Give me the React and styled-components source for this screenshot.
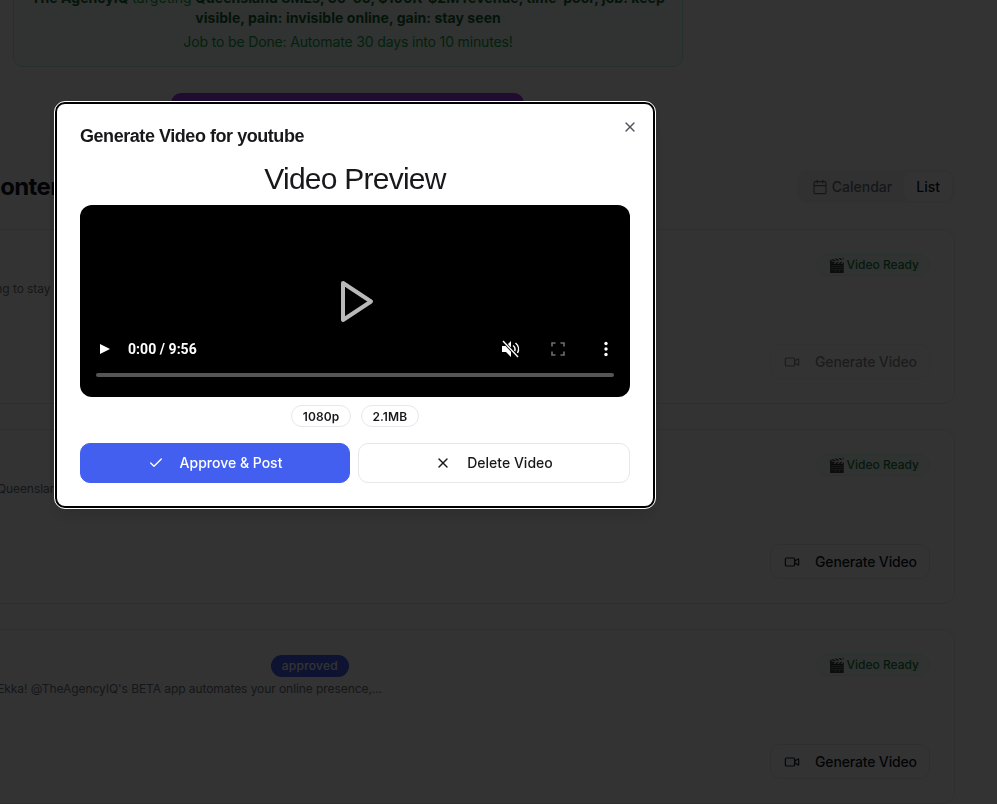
import { createGlobalStyle, styled } from "styled-components";
import { Calendar, Check, Video, X } from "lucide-react";

const GlobalStyle = createGlobalStyle`
  html, body {
    margin: 0;
    height: 100%;
    background: #fff;
    overflow: hidden;
  }
  body {
    font-family: Inter, "Liberation Sans", sans-serif;
    color: #111827;
  }
  * {
    box-sizing: border-box;
  }
`;

const Page = styled.main`
  width: 1085px;
  margin-left: -130px;
  display: flex;
  flex-direction: column;
  align-items: flex-end;
`;

const PersonaBox = styled.section`
  width: 670px;
  height: 112px;
  margin: -45px 272px 0 0;
  padding: 32px 16px 0;
  border: 1px solid #bbf7d0;
  border-radius: 10px;
  background: #f0fdf4;
  text-align: center;
  font-size: 14px;
  line-height: 20px;
  color: #16a34a;
`;

const PersonaLead = styled.p`
  margin: 0;
  font-weight: 700;
  letter-spacing: 0.05px;
  color: #166534;
`;

const PersonaPlain = styled.span`
  font-weight: 400;
  color: #16a34a;
`;

const PersonaJob = styled.p`
  margin: 4px 0 0;
  letter-spacing: -0.15px;
`;

const PurpleButton = styled.div`
  width: 353px;
  height: 44px;
  margin: 26px 431px 0 0;
  border-radius: 10px;
  background: #9f39f5;
`;

const SectionHeader = styled.header`
  width: 100%;
  height: 33px;
  margin-top: 33px;
  padding-left: 113px;
  display: flex;
  justify-content: space-between;
  align-items: center;
`;

const SectionTitle = styled.h2`
  margin: 0;
  font-size: 24px;
  font-weight: 700;
  letter-spacing: -0.6px;
`;

const ViewToggle = styled.div`
  display: flex;
  align-items: center;
  height: 33px;
  padding: 0 3px;
  border-radius: 10px;
  background: #f5f5f6;
`;

const ToggleItem = styled.span`
  display: flex;
  align-items: center;
  gap: 4px;
  height: 29px;
  padding: 0 12px;
  border-radius: 8px;
  font-size: 14px;
  font-weight: 500;
  background: ${({ $active }) => ($active ? "#fff" : "transparent")};
  color: ${({ $active }) => ($active ? "#111827" : "#6b7280")};
`;

const CardList = styled.div`
  width: 100%;
  margin-top: 26px;
  display: flex;
  flex-direction: column;
  gap: 25px;
`;

const Card = styled.article`
  height: 175px;
  padding: 24px;
  border: 1px solid #e5e7eb;
  border-radius: 12px;
  background: #fff;
  display: flex;
  justify-content: space-between;
`;

const CardBody = styled.div`
  display: flex;
  flex-direction: column;
  width: 487px;
  align-items: flex-end;
`;

const StatusSlot = styled.div`
  height: 22px;
  margin-right: 33px;
`;

const StatusBadge = styled.span`
  height: 22px;
  padding: 0 11px;
  border-radius: 999px;
  display: inline-flex;
  align-items: center;
  font-size: 12px;
  font-weight: 500;
  color: #fff;
  background: #4361ee;
  letter-spacing: 0.25px;
`;

const Excerpt = styled.p`
  margin: 5px 0 0;
  font-size: 12px;
  line-height: 16px;
  letter-spacing: -0.07px;
  color: #6b7280;
  white-space: nowrap;
`;

const CardActions = styled.div`
  display: flex;
  flex-direction: column;
  justify-content: space-between;
  align-items: flex-end;
`;

const ReadyBadge = styled.span`
  height: 22px;
  padding: 0 10px 0 11px;
  border: 1px solid #dcfce7;
  border-radius: 999px;
  background: #f0fdf4;
  display: inline-flex;
  align-items: center;
  gap: 2px;
  font-size: 12px;
  font-weight: 500;
  line-height: 18px;
  color: #15803d;
`;

const ReadyEmoji = styled.span`
  font-size: 14px;
`;

const GenerateButton = styled.button`
  width: 160px;
  height: 35px;
  border: 1px solid #e5e7eb;
  border-radius: 10px;
  background: #fff;
  display: flex;
  align-items: center;
  gap: 15px;
  padding: 0 12px 0 13px;
  font-family: inherit;
  font-size: 14px;
  font-weight: 500;
  letter-spacing: -0.15px;
  white-space: nowrap;
  color: #111827;
  opacity: ${({ disabled }) => (disabled ? 0.5 : 1)};
`;

const Overlay = styled.div`
  position: fixed;
  inset: 0;
  background: rgba(0, 0, 0, 0.8);
`;

const Dialog = styled.div`
  position: fixed;
  left: 55px;
  top: 102px;
  width: 600px;
  height: 406px;
  padding: 23px 23px 0;
  background: #fff;
  border-radius: 10px;
  border: 2px solid #000;
  outline: 1px solid #fff;
  box-shadow: 0 10px 15px rgba(0, 0, 0, 0.1);
`;

const DialogTitle = styled.h2`
  margin: 0;
  font-family: "Liberation Sans", sans-serif;
  font-size: 18px;
  line-height: 18px;
  font-weight: 700;
  letter-spacing: -0.45px;
  color: #18181b;
`;

const CloseButton = styled.button`
  position: absolute;
  right: 15px;
  top: 15px;
  padding: 0;
  border: 0;
  background: none;
  display: flex;
  color: #52525b;
`;

const PreviewTitle = styled.h3`
  margin: 16px 0 8px;
  font-family: "Liberation Sans", sans-serif;
  font-size: 30px;
  line-height: 36px;
  font-weight: 400;
  letter-spacing: -0.75px;
  text-align: center;
  color: #18181b;
`;

const Player = styled.div`
  position: relative;
  height: 192px;
  border-radius: 12px;
  background: #000;
  display: flex;
  flex-direction: column;
  justify-content: flex-end;
  padding: 0 16px 20px;
`;

const BigPlay = styled.svg`
  position: absolute;
  left: 260px;
  top: 75px;
`;

const ControlsRow = styled.div`
  display: flex;
  align-items: center;
  height: 24px;
  margin: 0 -4px 12px 0;
`;

const TimeText = styled.span`
  margin-left: 16px;
  flex: 1;
  font-family: Roboto, sans-serif;
  font-size: 14px;
  font-weight: 700;
  letter-spacing: 0.05px;
  color: #fff;
`;

const ControlIcon = styled.svg`
  display: block;
  margin-left: 24px;
`;

const Timeline = styled.div`
  height: 4px;
  border-radius: 2px;
  background: #555;
`;

const PillRow = styled.div`
  display: flex;
  justify-content: center;
  gap: 10px;
  margin-top: 8px;
`;

const Pill = styled.span`
  height: 22px;
  padding: 0 10.5px;
  border: 1px solid #e5e7eb;
  border-radius: 999px;
  display: inline-flex;
  align-items: center;
  font-size: 12px;
  font-weight: 600;
  letter-spacing: 0.1px;
  color: #18181b;
`;

const ActionRow = styled.div`
  display: grid;
  grid-template-columns: 270px 272px;
  gap: 8px;
  margin-top: 16px;
`;

const ActionButton = styled.button`
  height: 40px;
  padding: 0 0 1px;
  display: flex;
  align-items: center;
  justify-content: center;
  gap: 16px;
  border-radius: 10px;
  border: 1px solid ${({ $primary }) => ($primary ? "#435ff0" : "#e5e7eb")};
  background: ${({ $primary }) => ($primary ? "#435ff0" : "#fff")};
  color: ${({ $primary }) => ($primary ? "#fff" : "#18181b")};
  font-family: inherit;
  font-size: 14px;
  font-weight: 500;
`;

const cards = [
  { id: 1, excerpt: "Stop struggling to stay visible while you run your business, and serve them well,...", disabled: true },
  { id: 2, excerpt: "Queensland small businesses deserve to be seen online every day,..." },
  {
    id: 3,
    excerpt: "Ahead of the Ekka! @TheAgencyIQ's BETA app automates your online presence,...",
    status: "approved",
  },
];

export default function App() {
  return (
    <>
      <GlobalStyle />
      <Page>
        <PersonaBox>
          <PersonaLead>
            The AgencyIQ <PersonaPlain>targeting</PersonaPlain> Queensland SMEs,
            30-55, $100K-$2M revenue, time-poor, job: keep visible, pain:
            invisible online, gain: stay seen
          </PersonaLead>
          <PersonaJob>Job to be Done: Automate 30 days into 10 minutes!</PersonaJob>
        </PersonaBox>
        <PurpleButton />
        <SectionHeader>
          <SectionTitle>Content Calendar</SectionTitle>
          <ViewToggle>
            <ToggleItem>
              <Calendar size={16} strokeWidth={1.75} />
              Calendar
            </ToggleItem>
            <ToggleItem $active>List</ToggleItem>
          </ViewToggle>
        </SectionHeader>
        <CardList>
          {cards.map((card) => (
            <Card key={card.id}>
              <CardBody>
                <StatusSlot>
                  {card.status && <StatusBadge>{card.status}</StatusBadge>}
                </StatusSlot>
                <Excerpt>{card.excerpt}</Excerpt>
              </CardBody>
              <CardActions>
                <ReadyBadge>
                  <ReadyEmoji>🎬</ReadyEmoji>
                  Video Ready
                </ReadyBadge>
                <GenerateButton disabled={card.disabled}>
                  <Video size={16} strokeWidth={1.75} />
                  Generate Video
                </GenerateButton>
              </CardActions>
            </Card>
          ))}
        </CardList>
      </Page>
      <Overlay />
      <Dialog>
        <DialogTitle>Generate Video for youtube</DialogTitle>
        <CloseButton>
          <X size={16} />
        </CloseButton>
        <PreviewTitle>Video Preview</PreviewTitle>
        <Player>
          <BigPlay width="34" height="44" viewBox="0 0 34 44">
            <path d="M3 3 L31 21.5 L3 40 Z" fill="none" stroke="#b9b9b9" strokeWidth="4" strokeLinejoin="round" />
          </BigPlay>
          <ControlsRow>
            <svg width="16" height="16" viewBox="0 0 16 16">
              <path d="M4 3 L14 8 L4 13 Z" fill="#fff" />
            </svg>
            <TimeText>0:00 / 9:56</TimeText>
            <ControlIcon width="24" height="24" viewBox="0 0 24 24">
              <path d="M4 9v6h4l5 5V4L8 9H4z" fill="#fff" />
              <path d="M15 8.5a5 5 0 0 1 1.5 6M17.5 6a8 8 0 0 1 2 10" fill="none" stroke="#fff" strokeWidth="1.5" />
              <path d="M5 4l15 16" stroke="#000" strokeWidth="3" />
              <path d="M5 4l15 16" stroke="#fff" strokeWidth="1.4" />
            </ControlIcon>
            <ControlIcon width="24" height="24" viewBox="0 0 24 24">
              <path d="M6 9.5V6h3.5M14.5 6H18v3.5M18 14.5V18h-3.5M9.5 18H6v-3.5" fill="none" stroke="#6f6f6f" strokeWidth="1.6" />
            </ControlIcon>
            <ControlIcon width="24" height="24" viewBox="0 0 24 24">
              <circle cx="12" cy="6.5" r="1.7" fill="#fff" />
              <circle cx="12" cy="12" r="1.7" fill="#fff" />
              <circle cx="12" cy="17.5" r="1.7" fill="#fff" />
            </ControlIcon>
          </ControlsRow>
          <Timeline />
        </Player>
        <PillRow>
          <Pill>1080p</Pill>
          <Pill>2.1MB</Pill>
        </PillRow>
        <ActionRow>
          <ActionButton $primary>
            <Check size={16} />
            Approve &amp; Post
          </ActionButton>
          <ActionButton>
            <X size={16} />
            Delete Video
          </ActionButton>
        </ActionRow>
      </Dialog>
    </>
  );
}
